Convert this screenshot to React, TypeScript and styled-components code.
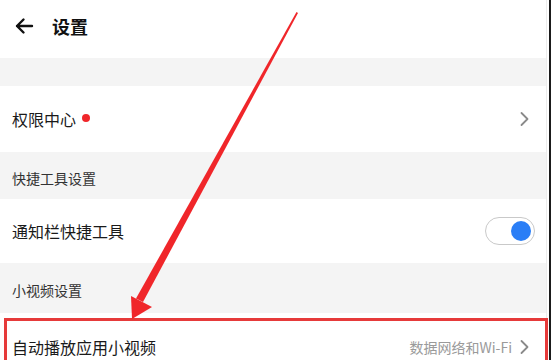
import styled, { createGlobalStyle } from 'styled-components';

const GlobalStyle = createGlobalStyle`
  *, *::before, *::after {
    box-sizing: border-box;
  }
  html, body {
    margin: 0;
    padding: 0;
    background: #fff;
  }
  body {
    font-family: "Noto Sans CJK SC", "Noto Sans", sans-serif;
    color: #1a1a1a;
  }
`;

const Screen = styled.div`
  position: relative;
  width: 551px;
  height: 360px;
  overflow: hidden;
  background: #fff;
`;

const Page = styled.div`
  display: flex;
  flex-direction: column;
  width: 547px;
  height: 100%;
  border-right: 1px solid #ececec;
`;

const EdgeLine = styled.div`
  position: absolute;
  top: 0;
  right: 0;
  width: 2px;
  height: 100%;
  background: #1b1b1b;
`;

const Header = styled.header`
  display: flex;
  align-items: center;
  flex: none;
  height: 58px;
  padding: 0 0 6px 14px;
  gap: 18px;
`;

const Title = styled.h1`
  margin: 0;
  font-size: 18px;
  font-weight: 700;
  color: #111;
`;

const Spacer = styled.div<{ $h: number }>`
  height: ${(p) => p.$h}px;
  background: #f4f4f4;
  flex: none;
`;

const SectionTitle = styled.div<{ $h: number }>`
  display: flex;
  align-items: center;
  height: ${(p) => p.$h}px;
  padding: 4px 0 0 12px;
  background: #f4f4f4;
  font-size: 14px;
  color: #333;
  flex: none;
`;

const Row = styled.div<{ $h: number }>`
  display: flex;
  align-items: center;
  height: ${(p) => p.$h}px;
  padding: 0 16px 0 12px;
  flex: none;
`;

const Label = styled.span`
  font-size: 16px;
  color: #1a1a1a;
  display: flex;
  align-items: center;
`;

const Dot = styled.span`
  width: 8px;
  height: 8px;
  border-radius: 50%;
  background: #f0262a;
  margin-left: 6px;
  margin-top: -3px;
`;

const Right = styled.div`
  margin-left: auto;
  display: flex;
  align-items: center;
  gap: 7px;
`;

const Hint = styled.span`
  font-size: 14px;
  color: #9a9a9a;
`;

const Toggle = styled.div`
  position: relative;
  width: 50px;
  height: 28px;
  border: 1.5px solid #c9c9c9;
  border-radius: 14px;
  background: #fff;
  margin-right: -5px;
`;

const Knob = styled.span`
  position: absolute;
  top: 2.5px;
  right: 3px;
  width: 20px;
  height: 20px;
  border-radius: 50%;
  background: #2a7ef6;
`;

const Highlight = styled.div`
  position: absolute;
  left: 4px;
  top: 318px;
  width: 544px;
  height: 60px;
  border: 3px solid #e63a3a;
`;

const Overlay = styled.svg`
  position: absolute;
  left: 0;
  top: 0;
  pointer-events: none;
`;

const Chevron = () => (
  <svg width="11" height="16" viewBox="0 0 11 16">
    <path d="M2.5 2 L8.5 8 L2.5 14" fill="none" stroke="#8a8a8a" strokeWidth="1.8" strokeLinecap="round" strokeLinejoin="round" />
  </svg>
);

const BackArrow = () => (
  <svg width="20" height="20" viewBox="0 0 20 20">
    <path d="M18 10 H3 M9.5 3.5 L3 10 L9.5 16.5" fill="none" stroke="#111" strokeWidth="2.4" strokeLinecap="round" strokeLinejoin="round" />
  </svg>
);

export default function App() {
  return (
    <Screen>
      <GlobalStyle />
      <Page>
        <Header>
          <BackArrow />
          <Title>设置</Title>
        </Header>
        <Spacer $h={28} />
        <Row $h={66}>
          <Label>
            权限中心
            <Dot />
          </Label>
          <Right>
            <Chevron />
          </Right>
        </Row>
        <SectionTitle $h={47}>快捷工具设置</SectionTitle>
        <Row $h={64}>
          <Label>通知栏快捷工具</Label>
          <Right>
            <Toggle>
              <Knob />
            </Toggle>
          </Right>
        </Row>
        <SectionTitle $h={50}>小视频设置</SectionTitle>
        <Row $h={68}>
          <Label>自动播放应用小视频</Label>
          <Right>
            <Hint>数据网络和Wi-Fi</Hint>
            <Chevron />
          </Right>
        </Row>
      </Page>
      <EdgeLine />
      <Highlight />
      <Overlay width="551" height="360" viewBox="0 0 551 360">
        <path d="M296.5 12 L298 13 L143 302 L136 298.5 Z" fill="#f0262a" />
        <path d="M131 296 L152 307 L132 319 Z" fill="#f0262a" />
      </Overlay>
    </Screen>
  );
}
